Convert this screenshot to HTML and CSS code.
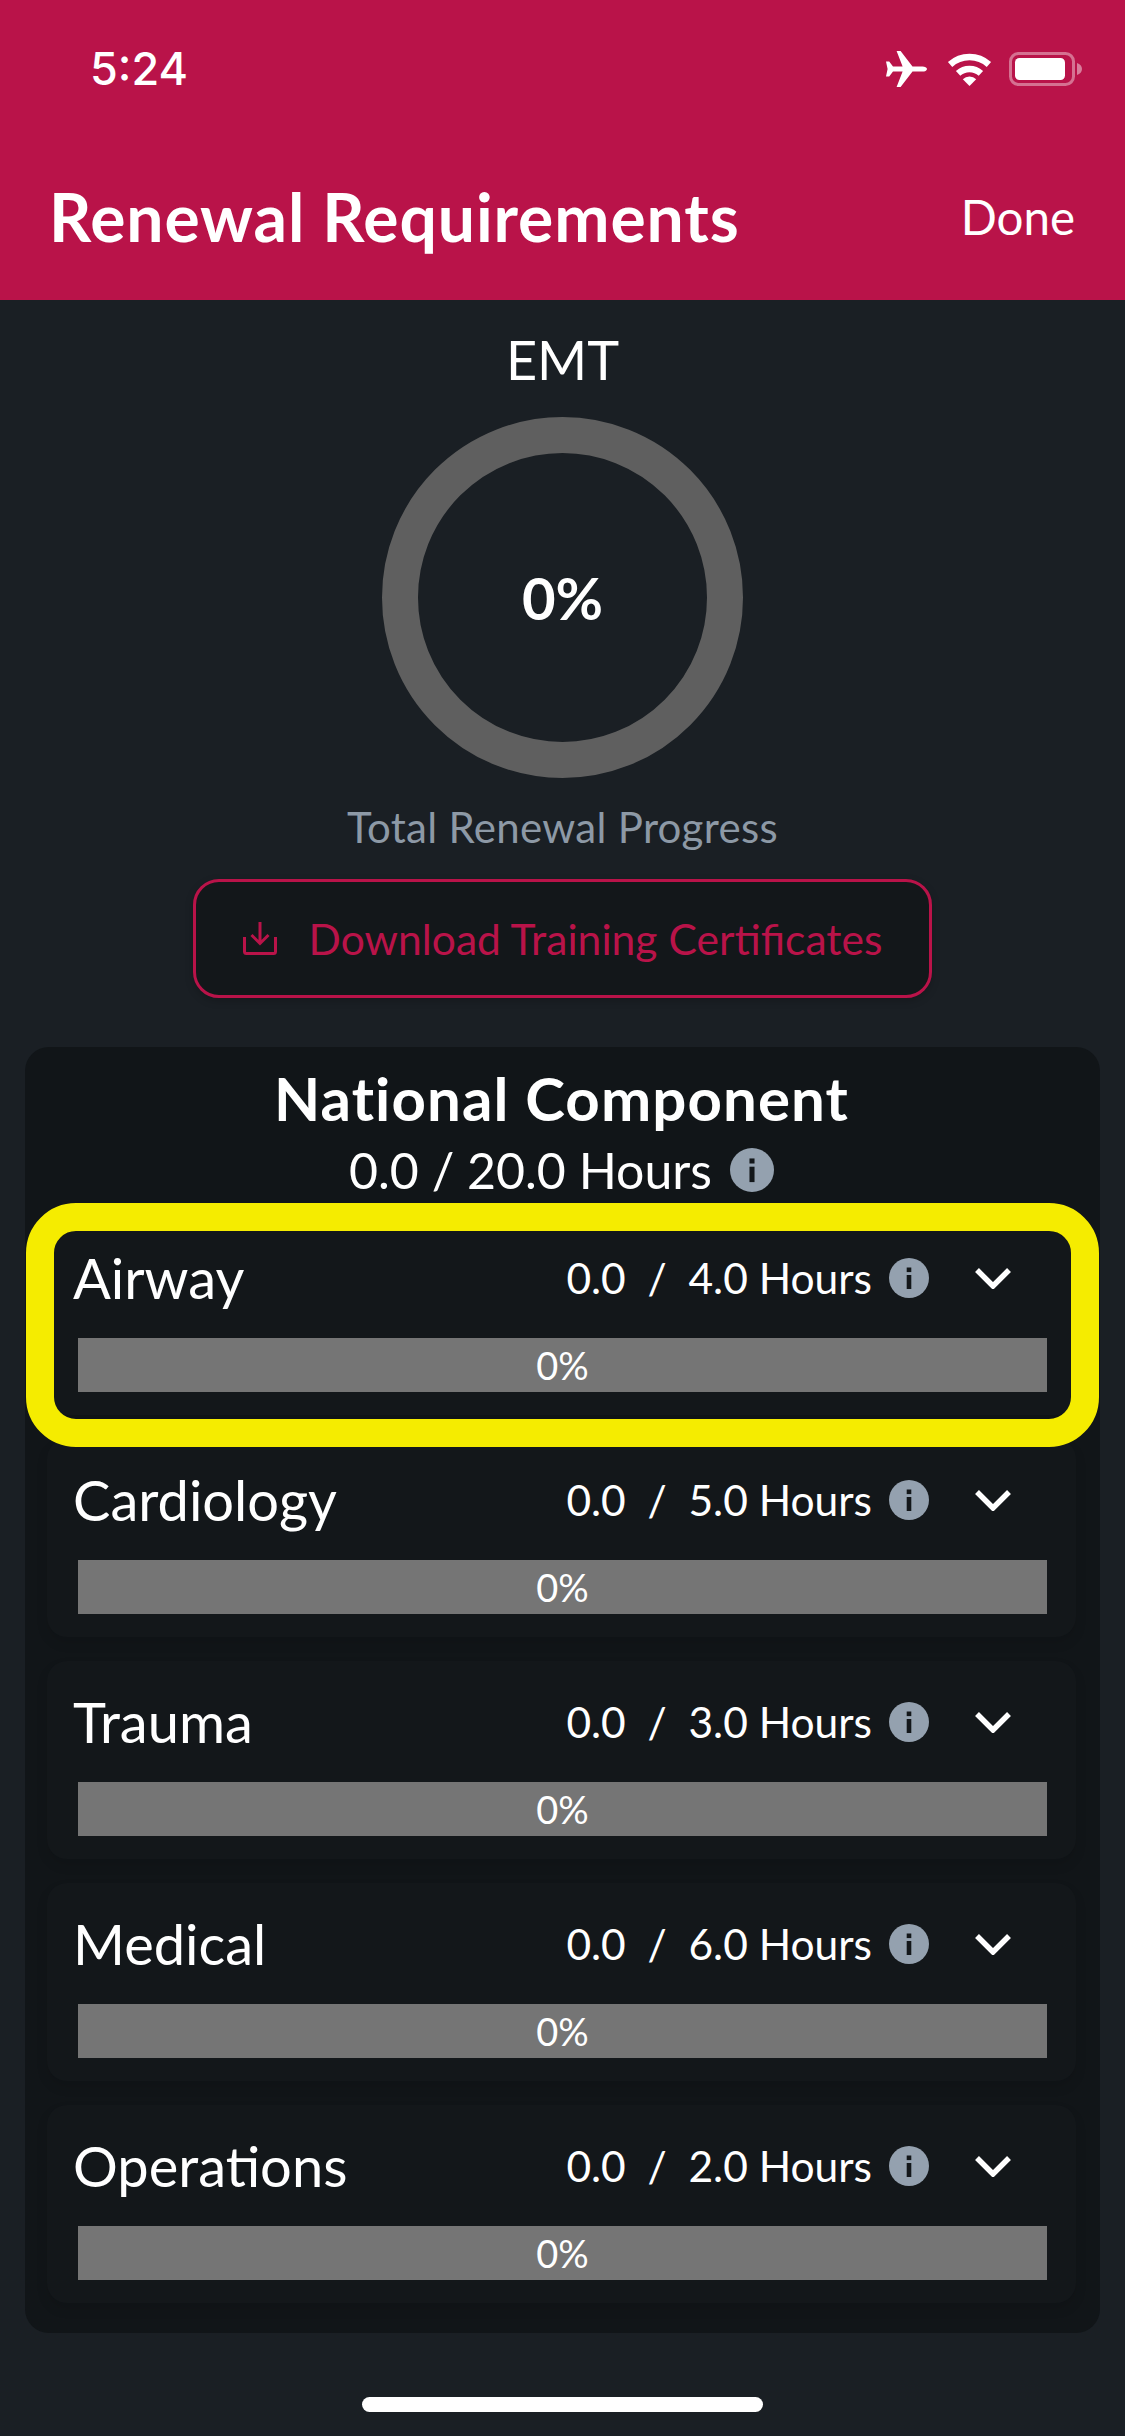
FILE: index.html
```html
<!DOCTYPE html>
<html lang="en">
<head>
<meta charset="utf-8">
<title>Renewal Requirements</title>
<link rel="stylesheet" href="styles.css">
</head>
<body>
<svg class="sprite" aria-hidden="true">
  <symbol id="info" viewBox="0 0 40 40"><circle cx="20" cy="20" r="20" fill="#94a1af"/><rect x="17.7" y="9.5" width="4.6" height="4.6" fill="#13171a"/><rect x="17.7" y="17" width="4.6" height="14" fill="#13171a"/></symbol>
  <symbol id="chev" viewBox="0 0 36 22"><path d="M2 3l16 16L34 3" fill="none" stroke="#fff" stroke-width="5.5"/></symbol>
</svg>
<header class="topbar">
  <div class="status">
    <span class="time">5:24</span>
    <div class="status-icons">
      <svg class="ic-plane" viewBox="0 0 41 36"><path d="M41 18c0-1.600-2.200-2.600-4.500-2.600H26.500L14.600 0h-4l6 15.400H7L3.200 10.600H0L1.600 18 0 25.400h3.200L7 20.600h9.600L10.600 36h4L26.500 20.600H36.500C38.800 20.600 41 19.600 41 18z" fill="#fff"/></svg>
      <svg class="ic-wifi" viewBox="0 0 45 33"><path d="M3.100 11.500A29 29 0 0 1 41.900 11.500M11.100 20.400A17 17 0 0 1 33.900 20.400" fill="none" stroke="#fff" stroke-width="6.500"/><path d="M22.500 33L15.800 26.300A9.500 9.500 0 0 1 29.200 26.300z" fill="#fff"/></svg>
      <svg class="ic-batt" viewBox="0 0 73 34"><rect x="1.500" y="1.500" width="63" height="31" rx="8" fill="none" stroke="#fff" stroke-opacity=".4" stroke-width="3"/><rect x="6" y="6" width="50" height="22" rx="4.500" fill="#fff"/><path d="M68 11c3 1 5 3 5 6s-2 5-5 6z" fill="#fff" fill-opacity=".45"/></svg>
    </div>
  </div>
  <div class="navbar">
    <h1 class="title">Renewal Requirements</h1>
    <span class="done">Done</span>
  </div>
</header>
<main class="content">
  <div class="level">EMT</div>
  <div class="ring"><span class="ring-label">0%</span></div>
  <div class="subtitle">Total Renewal Progress</div>
  <div class="download">
    <svg class="ic-dl" viewBox="0 0 34 33"><path d="M17 0v21M8.500 13L17 21.500 25.500 13M1.500 15v14.500a2 2 0 0 0 2 2h27a2 2 0 0 0 2-2V15" fill="none" stroke="#b91349" stroke-width="3"/></svg>
    <span>Download Training Certificates</span>
  </div>
  <section class="card">
    <h2 class="card-title">National Component</h2>
    <div class="card-hours"><span>0.0 / 20.0 Hours</span><svg class="ic-info-lg"><use href="#info"/></svg></div>
    <div class="rows">
      <article class="row row-marked">
        <div class="row-head"><span class="name">Airway</span><span class="hours">0.0 &nbsp;/ &nbsp;4.0 Hours</span><svg class="ic-info"><use href="#info"/></svg><svg class="ic-chev"><use href="#chev"/></svg></div>
        <div class="bar">0%</div>
      </article>
      <article class="row">
        <div class="row-head"><span class="name">Cardiology</span><span class="hours">0.0 &nbsp;/ &nbsp;5.0 Hours</span><svg class="ic-info"><use href="#info"/></svg><svg class="ic-chev"><use href="#chev"/></svg></div>
        <div class="bar">0%</div>
      </article>
      <article class="row">
        <div class="row-head"><span class="name">Trauma</span><span class="hours">0.0 &nbsp;/ &nbsp;3.0 Hours</span><svg class="ic-info"><use href="#info"/></svg><svg class="ic-chev"><use href="#chev"/></svg></div>
        <div class="bar">0%</div>
      </article>
      <article class="row">
        <div class="row-head"><span class="name">Medical</span><span class="hours">0.0 &nbsp;/ &nbsp;6.0 Hours</span><svg class="ic-info"><use href="#info"/></svg><svg class="ic-chev"><use href="#chev"/></svg></div>
        <div class="bar">0%</div>
      </article>
      <article class="row">
        <div class="row-head"><span class="name">Operations</span><span class="hours">0.0 &nbsp;/ &nbsp;2.0 Hours</span><svg class="ic-info"><use href="#info"/></svg><svg class="ic-chev"><use href="#chev"/></svg></div>
        <div class="bar">0%</div>
      </article>
    </div>
  </section>
  <div class="home"></div>
</main>
</body>
</html>
```
FILE: styles.css
```css
* { box-sizing: border-box; }
html, body { margin: 0; padding: 0; }
body {
  width: 1125px;
  height: 2436px;
  overflow: hidden;
  background: #1a1f24;
  color: #fff;
  font-family: "Lato", "Noto Sans", sans-serif;
}
.sprite { position: absolute; width: 0; height: 0; }

.topbar { height: 300px; background: #b91349; display: flex; flex-direction: column; }
.status { height: 177px; padding: 45px 43px 0 90px; display: flex; justify-content: space-between; align-items: flex-start; }
.time { font-family: "Inter", sans-serif; font-size: 45px; font-weight: 500; line-height: 48px; }
.status-icons { display: flex; align-items: center; padding-top: 6px; }
.ic-plane { width: 41px; height: 36px; }
.ic-wifi { width: 45px; height: 33px; margin-left: 20px; }
.ic-batt { width: 73px; height: 34px; margin-left: 17px; }
.navbar { display: flex; justify-content: space-between; align-items: center; padding: 0 50px 0 49px; height: 80px; }
.title { margin: 0; font-size: 66px; font-weight: 700; line-height: 78px; letter-spacing: .9px; }
.done { font-size: 47.5px; font-weight: 400; line-height: 60px; }

.content { display: flex; flex-direction: column; align-items: center; padding-top: 30px; }
.level { font-size: 54px; line-height: 60px; font-weight: 400; }
.ring {
  width: 361px; height: 361px; margin-top: 27px;
  border: 36px solid #5f5f5f; border-radius: 50%;
  display: flex; align-items: center; justify-content: center;
}
.ring-label { font-size: 58px; font-weight: 700; }
.subtitle { margin-top: 24px; font-size: 42px; line-height: 50px; color: #8d99a6; letter-spacing: .3px; }
.download {
  margin-top: 27px; width: 739px; height: 119px;
  background: #13171a; border: 3px solid #b91349; border-radius: 26px;
  display: flex; align-items: center; justify-content: center; gap: 32px;
  color: #b91349; font-size: 42.6px;
  box-shadow: 0 3px 8px rgba(0, 0, 0, .2);
}
.ic-dl { width: 34px; height: 33px; }

.card {
  align-self: flex-start; margin: 49px 0 0 25px; width: 1075px; height: 1286px;
  background: #111518; border-radius: 24px; padding: 15px 24px 30px 22px;
}
.card-title { margin: 0; text-align: center; font-size: 60px; font-weight: 700; line-height: 72px; letter-spacing: 1.1px; }
.card-hours { display: flex; justify-content: center; align-items: center; gap: 18px; height: 72px; font-size: 50px; }
.ic-info-lg { width: 44px; height: 44px; }
.rows { margin-top: 11px; display: flex; flex-direction: column; gap: 24px; }
.row { height: 198px; background: #13171a; border-radius: 20px; box-shadow: 0 6px 12px rgba(0, 0, 0, .1); }
.row-marked { position: relative; z-index: 1; }
.row-marked::after {
  content: ""; position: absolute; top: -14px; right: -23px; bottom: -32px; left: -21px;
  border: 28px solid #f5ec00; border-radius: 50px;
}
.row-head { height: 121px; padding: 0 65px 0 26px; display: flex; align-items: center; }
.name { flex: 1; font-size: 56px; }
.hours { font-size: 42.5px; }
.ic-info { width: 40px; height: 40px; margin-left: 17px; }
.ic-chev { width: 36px; height: 22px; margin-left: 46px; }
.bar {
  width: 969px; height: 54px; margin-left: 31px;
  background: #757575; text-align: center; font-size: 38px; line-height: 54px;
}
.home { width: 401px; height: 15px; margin-top: 64px; border-radius: 8px; background: #fff; }
```
